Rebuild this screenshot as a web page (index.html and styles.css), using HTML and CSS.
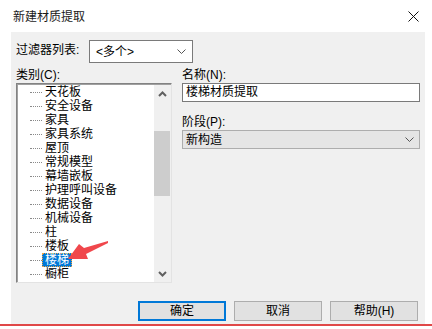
FILE: index.html
```html
<!DOCTYPE html>
<html lang="zh-CN">
<head>
  <meta charset="UTF-8">
  <title>新建材质提取</title>
  <link rel="stylesheet" href="styles.css">
</head>
<body>

  <!-- title bar -->
  <div class="titlebar">
    <span class="title">新建材质提取</span>
    <svg class="close" width="11" height="11" viewBox="0 0 11 11">
      <path d="M0.5 0.5 L10.5 10.5 M10.5 0.5 L0.5 10.5" stroke="#111" stroke-width="1" fill="none"/>
    </svg>
  </div>

  <div class="dialog">
    <div class="filter-row">
      <span class="filter-label">过滤器列表:</span>
      <div class="combo">
        <span>&lt;多个&gt;</span>
        <svg class="chev" width="9" height="5" viewBox="0 0 9 5"><path d="M0.5 0.5 L4.5 4.5 L8.5 0.5" stroke="#555" fill="none"/></svg>
      </div>
    </div>

    <div class="columns">
      <div class="col-left">
        <p class="label">类别(C):</p>
        <div class="listbox">
          <ul class="tree">
            <li><i></i><span>天花板</span></li>
            <li><i></i><span>安全设备</span></li>
            <li><i></i><span>家具</span></li>
            <li><i></i><span>家具系统</span></li>
            <li><i></i><span>屋顶</span></li>
            <li><i></i><span>常规模型</span></li>
            <li><i></i><span>幕墙嵌板</span></li>
            <li><i></i><span>护理呼叫设备</span></li>
            <li><i></i><span>数据设备</span></li>
            <li><i></i><span>机械设备</span></li>
            <li><i></i><span>柱</span></li>
            <li><i></i><span>楼板</span></li>
            <li class="selected"><i></i><span>楼梯</span></li>
            <li><i></i><span>橱柜</span></li>
          </ul>
          <div class="vscroll">
            <div class="sb-btn">
              <svg width="9" height="6" viewBox="0 0 9 6"><path d="M1 5 L4.5 1.5 L8 5" stroke="#606060" stroke-width="2" fill="none"/></svg>
            </div>
            <div class="sb-track">
              <div class="sb-thumb"></div>
            </div>
            <div class="sb-btn">
              <svg width="9" height="6" viewBox="0 0 9 6"><path d="M1 1 L4.5 4.5 L8 1" stroke="#606060" stroke-width="2" fill="none"/></svg>
            </div>
          </div>
          <!-- red pointer drawn over the list -->
          <svg class="pointer" width="52" height="28" viewBox="0 0 52 28">
            <polygon points="48,5 24,12 19,8 8,23 28,23 26,18 48,7" fill="#f0474c"/>
          </svg>
        </div>
      </div>

      <div class="col-right">
        <p class="label">名称(N):</p>
        <div class="textbox">楼梯材质提取</div>
        <p class="label stage">阶段(P):</p>
        <div class="dropdown">
          <span>新构造</span>
          <svg class="chev" width="9" height="5" viewBox="0 0 9 5"><path d="M0.5 0.5 L4.5 4.5 L8.5 0.5" stroke="#555" fill="none"/></svg>
        </div>
      </div>
    </div>

    <div class="buttons">
      <button class="btn default">确定</button>
      <button class="btn">取消</button>
      <button class="btn">帮助(H)</button>
    </div>
  </div>

  <div class="taskline"></div>

</body>
</html>
```

FILE: styles.css
```css
* {
  box-sizing: border-box;
}
body {
  margin: 0;
  width: 432px;
  height: 329px;
  overflow: hidden;
  background: #fff;
  font-family: "Liberation Sans", "Noto Sans CJK SC", sans-serif;
  font-size: 12px;
  color: #000;
}
p {
  margin: 0;
}

.titlebar {
  height: 32px;
  padding: 0 13px 0 13px;
  display: flex;
  align-items: center;
  justify-content: space-between;
}
.title {
  font-size: 12px;
  line-height: 16px;
  color: #1a1a1a;
  padding-top: 1px;
}
.close {
  margin-top: 1px;
}

.dialog {
  margin-left: 11px;
  width: 414px;
  height: 292px;
  background: #f0f0f0;
  padding: 8px 5px 3px 5px;
  display: flex;
  flex-direction: column;
}

.filter-row {
  display: flex;
  align-items: center;
}
.filter-label {
  width: 73px;
  line-height: 16px;
  margin-top: -3px;
}
.combo {
  width: 104px;
  height: 23px;
  border: 1px solid #7a7a7a;
  background: #fff;
  display: flex;
  align-items: center;
  justify-content: space-between;
  padding: 0 6px 0 6px;
  line-height: 16px;
}

.columns {
  display: flex;
  gap: 10px;
  margin-top: 4px;
}
.label {
  line-height: 16px;
  height: 16px;
}
.col-left {
  width: 156px;
}
.col-right {
  width: 238px;
}

.listbox {
  position: relative;
  height: 200px;
  display: flex;
  border-style: solid;
  border-width: 1px;
  border-color: #828282 #e3e3e3 #e3e3e3 #828282;
  box-shadow: inset 1px 1px 0 #a0a0a0;
  background: #fff;
  padding: 1px 0 0 1px;
}
.tree {
  list-style: none;
  margin: 0;
  padding: 0;
  flex: 1;
  overflow: hidden;
}
.tree li {
  height: 14px;
  display: flex;
  align-items: center;
  padding-left: 12px;
}
.tree li i {
  width: 12px;
  border-top: 1px dotted #8a8a8a;
}
.tree li span {
  line-height: 12px;
  padding: 0 2px;
  border: 1px solid transparent;
  white-space: nowrap;
}
.tree li.selected span {
  background: #0078d7;
  color: #fff;
  border: 1px dotted #f4a340;
}

.vscroll {
  width: 17px;
  background: #f0f0f0;
  display: flex;
  flex-direction: column;
}
.sb-btn {
  height: 17px;
  display: flex;
  align-items: center;
  justify-content: center;
}
.sb-track {
  flex: 1;
  padding-top: 29px;
}
.sb-thumb {
  height: 65px;
  margin: 0 1px 0 0;
  background: #cdcdcd;
}

.pointer {
  position: absolute;
  left: 43px;
  top: 152px;
}

.textbox {
  height: 19px;
  border: 1px solid #7a7a7a;
  background: #fff;
  padding: 0 3px;
  line-height: 16px;
}
.stage {
  margin-top: 12px;
}
.dropdown {
  height: 19px;
  border: 1px solid #adadad;
  background: #e5e5e5;
  padding: 0 5px 0 3px;
  display: flex;
  align-items: center;
  justify-content: space-between;
  line-height: 16px;
}

.buttons {
  margin-top: auto;
  display: flex;
  justify-content: flex-end;
  gap: 8px;
  padding-right: 2px;
}
.btn {
  width: 88px;
  height: 20px;
  padding: 0;
  font-family: inherit;
  font-size: 12px;
  line-height: 16px;
  color: #000;
  background: #e1e1e1;
  border: 1px solid #adadad;
}
.btn.default {
  border: 2px solid #0078d7;
}

.taskline {
  height: 2px;
  background: #e04848;
}
```
